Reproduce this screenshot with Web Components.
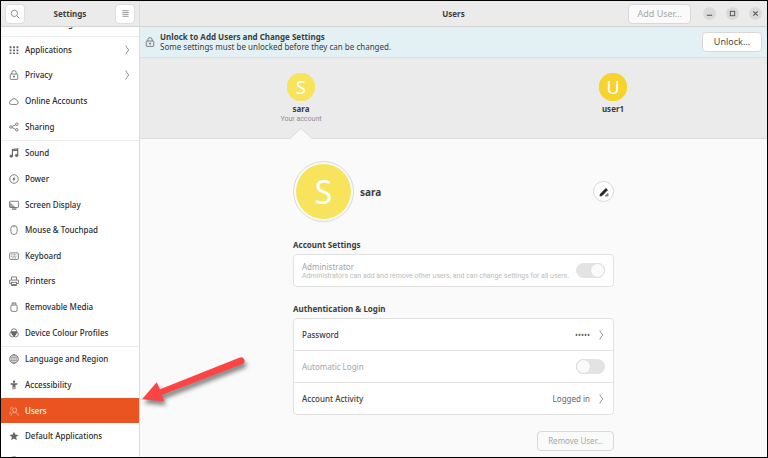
<!DOCTYPE html>
<html lang="en-GB">
<head>
<meta charset="utf-8">
<title>Settings</title>
<style>
html { height: 100%; }
body {
  margin: 0; height: 100%;
  font-family: "Noto Sans", "Open Sans", sans-serif;
  font-size: 8px; line-height: 12px; color: #3d3d3d;
  --line: #dcdcdc; --chrome: #ebebeb; --accent: #e95420; --small: 7px Roboto, "Noto Sans", sans-serif;
}
</style>
</head>
<body>
<settings-window></settings-window>

<script>
const ICONS = {
  search: '<circle cx="7" cy="7" r="5"/><path d="M11 11l4 4"/>',
  menu: '<path d="M2.500 3h11M2.500 6.300h11M2.500 9.600h11M2.500 13h11"/>',
  multitask: '<rect x="2" y="3" width="12" height="8" rx="2"/>',
  apps: '<g fill="currentColor" stroke="none"><path d="M1 2h3v3H1zM6.500 2h3v3h-3zM12 2h3v3h-3zM1 7h3v3H1zM6.500 7h3v3h-3zM12 7h3v3h-3zM1 12h3v2.500H1zM6.500 12h3v2.500h-3zM12 12h3v2.500h-3z"/></g>',
  lock: '<rect x="2" y="6.500" width="12" height="8.500" rx="1"/><path d="M4.500 6.500V4.500a3.500 3.500 0 0 1 7 0v2"/><path d="M8 9v3.500M6.500 10.300h3"/>',
  cloud: '<path d="M4 13.500a3 3 0 0 1-.5-6 4.700 4.700 0 0 1 9-.2 3.200 3.200 0 0 1-.5 6.200z"/>',
  share: '<circle cx="3" cy="8" r="2"/><circle cx="12.500" cy="3.500" r="2"/><circle cx="12.500" cy="12.500" r="2"/><path d="M5 7l5.500-2.700M5 9l5.500 2.700"/>',
  sound: '<path d="M5.500 12.500V2.500l8.500-1v10M5.500 4.500l8.500-1" stroke-width="1.800"/><ellipse cx="3.700" cy="13" rx="2.300" ry="1.800" fill="currentColor"/><ellipse cx="12.200" cy="12" rx="2.200" ry="1.800" fill="currentColor"/>',
  power: '<circle cx="8" cy="8" r="6.800"/><path d="M9 3.500L5.500 8.700h2L7 12.500l3.500-5.200h-2z" fill="currentColor" stroke="none"/>',
  display: '<rect x="1" y="2" width="14" height="10" rx="1"/><path d="M1 4l9 8H2z" fill="currentColor" opacity=".6"/><path d="M5 14.500h7" stroke-width="2"/>',
  mouse: '<rect x="3" y="1" width="10" height="14" rx="4.500"/><path d="M8 1v3"/>',
  keyboard: '<rect x="1" y="3" width="14" height="10.500" rx="1.500"/><path d="M3.500 6h9M3.500 8.500h9M5 11h6" stroke-dasharray="1.400 .9"/>',
  printer: '<path d="M4 6V1.500h8V6M3.500 12H1V6.500h14V12h-2.500"/><rect x="4" y="10" width="8" height="5"/><path d="M5 14h6" stroke-width="2"/>',
  media: '<rect x="3" y="5" width="10" height="10" rx="2"/><path d="M5 5V1.500h6V5M6.500 3h1M8.700 3h1"/>',
  colour: '<circle cx="8" cy="5.500" r="4.300"/><circle cx="5.500" cy="10" r="4.300"/><circle cx="10.500" cy="10" r="4.300"/><path d="M4 6.200h8l-1 4L8 13l-3-2.800z" fill="currentColor"/>',
  globe: '<circle cx="8" cy="8" r="6.800"/><path d="M1.500 6h13M1.500 10h13M8 1v14" stroke-width=".9"/><ellipse cx="8" cy="8" rx="3.500" ry="6.800" stroke-width=".9"/>',
  access: '<circle cx="8" cy="2.600" r="1.900" fill="currentColor" stroke="none"/><path d="M2.500 5h11v2l-3.200.8v7H8.600v-4H7.400v4H5.700v-7L2.500 7z" fill="currentColor" stroke="none"/>',
  users: '<circle cx="9" cy="6.500" r="3.300"/><path d="M3 15.500c.3-3.500 2.500-5 6-5s5.500 1.500 6 5M5.500 1.500a3 3 0 0 0-2 5M1 12.500c.2-2 1-3 2.300-3.800"/>',
  star: '<path d="M8 1l2.100 4.700 5.100.5-3.900 3.400 1.200 5L8 12l-4.500 2.600 1.200-5L.8 6.200l5.100-.5z" fill="currentColor" stroke="none"/>',
  clock: '<circle cx="8" cy="8" r="6.800"/><path d="M8 4v4h3"/>',
  chevron: '<path d="M6 .8c1.200 2.400 2.500 4.900 4.800 7.200-2.300 2.300-3.600 4.800-4.800 7.200"/>',
  pencil: '<path d="M1.500 14.500l.8-3.300L11 2.300l2.600 2.500-8.700 8.900z" fill="currentColor"/><path d="M9.500 14.500h5v-4.500z" fill="currentColor" opacity=".55"/>',
  minimise: '<path d="M2 12h12" stroke-width="2.400"/>',
  maximise: '<rect x="3" y="3" width="10" height="10" stroke-width="2.200"/>',
  close: '<path d="M3 3l10 10M13 3L3 13" stroke-width="2.500"/>'
};

const define = (name, html, setup) => {
  const template = document.createElement('template');
  template.innerHTML = html;
  customElements.define(name, class extends HTMLElement {
    connectedCallback() {
      if (this.shadowRoot) return;
      this.attachShadow({ mode: 'open' }).append(template.content.cloneNode(true));
      if (setup) setup(this, this.shadowRoot);
    }
  });
};

define('ui-icon', `
<style>
:host { display: inline-flex; flex: none; width: var(--icon-size, 10px); height: var(--icon-size, 10px); }
svg { width: 100%; height: 100%; display: block; }
</style>
<svg viewBox="0 0 16 16" fill="none" stroke="currentColor" stroke-width="1.300" aria-hidden="true"></svg>`,
(host, root) => { root.querySelector('svg').innerHTML = ICONS[host.getAttribute('name')]; });

define('ui-button', `
<style>
:host { display: inline-flex; font-size: 9px; }
button {
  font: inherit; color: #4a4a4a; background: #fff;
  border: 1px solid #d8d8d8; border-radius: 4px; margin: 0;
  padding: 0 var(--pad, 11px); height: 20px; min-width: 20px;
  display: flex; align-items: center; justify-content: center; box-sizing: border-box;
}
:host([kind="icon"]) button { padding: 0; width: 20px; color: #777; border-color: #dedede; }
:host([kind="round"]) button { padding: 0; width: 21px; height: 21px; border-radius: 50%; color: #222; }
:host([kind="control"]) button { padding: 0; width: 13px; height: 13px; min-width: 0; border: 0; border-radius: 50%; background: #dadada; color: #555; }
button:disabled { color: #a8a8a8; background: #fafafa; }
</style>
<button type="button"><slot></slot></button>`,
(host, root) => {
  const button = root.querySelector('button');
  button.disabled = host.hasAttribute('disabled');
  if (host.hasAttribute('label')) button.setAttribute('aria-label', host.getAttribute('label'));
});

define('nav-item', `
<style>
:host { display: flex; flex: 1 1 0; min-height: 0; }
a {
  flex: 1; display: flex; align-items: center; gap: 6px; padding: 0 7px 0 8px;
  color: #2c2c2c; text-decoration: none; font-weight: 500; white-space: nowrap;
}
ui-icon { color: #666; }
span { flex: 1; }
.more { color: #777; }
:host([selected]) a { background: var(--accent); color: #fff; }
:host([selected]) ui-icon { color: #f6b9a0; }
</style>
<a href="#"><ui-icon></ui-icon><span><slot></slot></span></a>`,
(host, root) => {
  const link = root.querySelector('a');
  root.querySelector('ui-icon').replaceWith(Object.assign(document.createElement('template'),
    { innerHTML: `<ui-icon name="${host.getAttribute('icon')}"></ui-icon>` }).content);
  if (host.hasAttribute('more')) link.insertAdjacentHTML('beforeend', '<ui-icon class="more" name="chevron"></ui-icon>');
  if (host.hasAttribute('selected')) link.setAttribute('aria-current', 'page');
});

define('nav-list', `
<style>
:host { display: flex; min-height: 0; overflow: hidden; background: #fff; border-right: 1px solid var(--line); }
nav { flex: 1; display: flex; flex-direction: column; }
.group { display: flex; flex-direction: column; flex: 4 1 0; min-height: 0; border-top: 1px solid #ebebeb; }
.long { flex-grow: 8; }
.above, .below { display: flex; flex: none; overflow: hidden; }
.above { height: 9px; align-items: flex-end; }
.below { height: 8px; align-items: flex-start; }
.above nav-item, .below nav-item { height: 24px; }
</style>
<nav aria-label="Settings">
  <div class="above"><nav-item icon="multitask">Multitasking</nav-item></div>
  <div class="group">
    <nav-item icon="apps" more>Applications</nav-item>
    <nav-item icon="lock" more>Privacy</nav-item>
    <nav-item icon="cloud">Online Accounts</nav-item>
    <nav-item icon="share">Sharing</nav-item>
  </div>
  <div class="group long">
    <nav-item icon="sound">Sound</nav-item>
    <nav-item icon="power">Power</nav-item>
    <nav-item icon="display">Screen Display</nav-item>
    <nav-item icon="mouse">Mouse &amp; Touchpad</nav-item>
    <nav-item icon="keyboard">Keyboard</nav-item>
    <nav-item icon="printer">Printers</nav-item>
    <nav-item icon="media">Removable Media</nav-item>
    <nav-item icon="colour">Device Colour Profiles</nav-item>
  </div>
  <div class="group">
    <nav-item icon="globe">Language and Region</nav-item>
    <nav-item icon="access">Accessibility</nav-item>
    <nav-item icon="users" selected>Users</nav-item>
    <nav-item icon="star">Default Applications</nav-item>
  </div>
  <div class="below"><nav-item icon="clock"></nav-item></div>
</nav>`);

define('title-bar', `
<style>
:host { display: grid; grid-template-columns: subgrid; grid-column: 1 / -1; height: 25px; background: var(--chrome); border-bottom: 1px solid #d2d2d2; }
.side, .main { display: grid; grid-template-columns: 1fr auto 1fr; align-items: center; }
.side { padding: 0 4px; border-right: 1px solid var(--line); }
.main { padding: 0 5px; }
h1, h2 { margin: 0; font-size: 8px; font-weight: 700; }
.end { justify-self: end; display: flex; align-items: center; gap: 10px; }
.add { margin-right: 2px; --pad: 8px; }
.side ui-icon { --icon-size: 10px; }
.end ui-icon { --icon-size: 7px; }
ui-button.end ui-icon { --icon-size: 9px; }
</style>
<div class="side">
  <ui-button kind="icon" label="Search"><ui-icon name="search"></ui-icon></ui-button>
  <h1>Settings</h1>
  <ui-button class="end" kind="icon" label="Menu"><ui-icon name="menu"></ui-icon></ui-button>
</div>
<div class="main">
  <span></span>
  <h2>Users</h2>
  <div class="end">
    <ui-button class="add" disabled>Add User…</ui-button>
    <ui-button kind="control" label="Minimise"><ui-icon name="minimise"></ui-icon></ui-button>
    <ui-button kind="control" label="Maximise"><ui-icon name="maximise"></ui-icon></ui-button>
    <ui-button kind="control" label="Close"><ui-icon name="close"></ui-icon></ui-button>
  </div>
</div>`);

define('unlock-banner', `
<style>
:host { display: flex; align-items: center; gap: 5px; height: 30px; padding: 0 5px; background: #e3f1f5; border-bottom: 1px solid #dadfe0; }
p { flex: 1; margin: 0; line-height: 10px; }
b { display: block; }
ui-icon { color: #666; }
</style>
<ui-icon name="lock"></ui-icon>
<p><b>Unlock to Add Users and Change Settings</b>Some settings must be unlocked before they can be changed.</p>
<ui-button>Unlock…</ui-button>`);

define('user-avatar', `
<style>
:host { display: flex; align-items: center; justify-content: center; flex: none; box-sizing: border-box;
  width: 28px; height: 28px; border-radius: 50%; background: var(--tint, #f8e45c); color: #fff; font-size: 18px; line-height: 1; }
:host([large]) { width: 61px; height: 61px; border: 1px solid #dadada; padding: 2px; background: #fafafa; font-size: 32px; }
span { display: flex; align-items: center; justify-content: center; width: 100%; height: 100%; border-radius: 50%; background: var(--tint, #f8e45c); }
</style>
<span><slot></slot></span>`);

define('user-tile', `
<style>
:host { display: flex; flex-direction: column; align-items: center; position: relative; padding-top: 15px; }
b { margin-top: 2px; line-height: 12px; }
small { font: var(--small); line-height: 8px; color: #909090; }
:host([second]) { --tint: #f6d32d; }
svg { display: none; position: absolute; bottom: -1px; width: 22px; height: 11px; }
:host([selected]) svg { display: block; }
</style>
<user-avatar></user-avatar>
<b></b><small><slot></slot></small>
<svg viewBox="0 0 22 11" aria-hidden="true"><path d="M0 10.500L11 .5l11 10V11H0z" fill="#fafafa"/><path d="M0 10.500L11 .5l11 10" fill="none" stroke="#dcdcdc"/></svg>`,
(host, root) => {
  const name = host.getAttribute('name');
  root.querySelector('b').textContent = name;
  root.querySelector('user-avatar').textContent = name[0].toUpperCase();
});

define('user-carousel', `
<style>
:host { display: grid; grid-template-columns: 1fr 1fr; gap: 4px; padding-left: 7px; height: 80px; background: var(--chrome); border-bottom: 1px solid var(--line); }
</style>
<user-tile name="sara" selected>Your account</user-tile>
<user-tile name="user1" second></user-tile>`);

define('pref-group', `
<style>
:host { display: block; }
h3 { margin: 0 0 3px; font-size: 8px; line-height: 12px; font-weight: 700; }
div { background: #fff; border: 1px solid #e2e2e2; border-radius: 4px; overflow: hidden; }
::slotted(:not(:first-child)) { border-top: 1px solid #e2e2e2; }
</style>
<h3></h3><div><slot></slot></div>`,
(host, root) => { root.querySelector('h3').textContent = host.getAttribute('heading'); });

define('pref-link', `
<style>
:host { display: block; }
button { width: 100%; height: 31px; margin: 0; border: 0; background: none; padding: 0 7px 0 8px; display: flex; align-items: center; gap: 6px; font: inherit; color: inherit; }
.label { flex: 1; text-align: left; font-weight: 500; }
.value { color: #666; }
ui-icon { color: #777; }
</style>
<button type="button"><span class="label"><slot></slot></span><span class="value"></span><ui-icon name="chevron"></ui-icon></button>`,
(host, root) => { root.querySelector('.value').textContent = host.getAttribute('value'); });

define('pref-switch', `
<style>
:host { display: flex; align-items: center; min-height: 31px; padding: 0 8px; color: #a4a4a4; }
label { flex: 1; min-width: 0; line-height: 10px; white-space: nowrap; }
small { display: block; font: var(--small); line-height: 8px; color: #b8beb5; }
input { appearance: none; flex: none; margin: 0; width: 29px; height: 15px; border-radius: 8px; background: #e3e3e3; display: flex; align-items: center; box-sizing: border-box; }
input::before { content: ""; box-sizing: border-box; width: 15px; height: 15px; border-radius: 50%; background: #fafafa; border: 1px solid #dcdcdc; }
input:checked { justify-content: flex-end; }
</style>
<label for="toggle"><slot></slot><small></small></label>
<input id="toggle" type="checkbox" role="switch" disabled>`,
(host, root) => {
  root.querySelector('input').checked = host.hasAttribute('on');
  const note = root.querySelector('small');
  if (host.hasAttribute('note')) note.textContent = host.getAttribute('note'); else note.remove();
});

define('user-panel', `
<style>
:host { display: block; background: #fafafa; min-height: 0; overflow: hidden; }
section { max-width: 321px; margin: 0 auto; padding-top: 22px; }
header { display: flex; align-items: center; gap: 6px; margin-bottom: 17px; }
h2 { flex: 1; margin: 0; font-size: 10px; line-height: 16px; font-weight: 700; }
pref-group { margin-bottom: 16px; }
footer { display: flex; justify-content: flex-end; --pad: 10px; }
footer ui-button { font-size: 8px; }
</style>
<section>
  <header><user-avatar large>S</user-avatar><h2>sara</h2>
    <ui-button kind="round" label="Edit name"><ui-icon name="pencil"></ui-icon></ui-button></header>
  <pref-group heading="Account Settings">
    <pref-switch on note="Administrators can add and remove other users, and can change settings for all users.">Administrator</pref-switch>
  </pref-group>
  <pref-group heading="Authentication &amp; Login">
    <pref-link value="•••••">Password</pref-link>
    <pref-switch>Automatic Login</pref-switch>
    <pref-link value="Logged in">Account Activity</pref-link>
  </pref-group>
  <footer><ui-button disabled>Remove User…</ui-button></footer>
</section>`);

define('pointer-arrow', `
<style>
:host { position: absolute; left: 137px; top: 349px; width: 112px; height: 64px; pointer-events: none; }
svg { display: block; width: 100%; height: 100%; overflow: visible; filter: drop-shadow(2px 4px 2px #0007); }
</style>
<svg viewBox="138 350 112 64" aria-hidden="true">
  <path d="M142 399.300L156.700 382.300L160 389.300L239.800 357.600A3.500 3.500 0 0 1 242.600 364L162 395L164 401.300Z" fill="#fb4545"/>
</svg>`);

define('settings-window', `
<style>
:host { display: grid; position: relative; box-sizing: border-box; height: 100%; overflow: hidden; border: 1px solid #000; background: #fafafa;
  grid-template-columns: 139px minmax(0, 1fr); grid-template-rows: auto minmax(0, 1fr); }
main { display: grid; grid-template-rows: auto auto minmax(0, 1fr); min-height: 0; }
</style>
<title-bar></title-bar>
<nav-list></nav-list>
<main>
  <unlock-banner></unlock-banner>
  <user-carousel></user-carousel>
  <user-panel></user-panel>
</main>
<pointer-arrow></pointer-arrow>`);
</script>
</body>
</html>
